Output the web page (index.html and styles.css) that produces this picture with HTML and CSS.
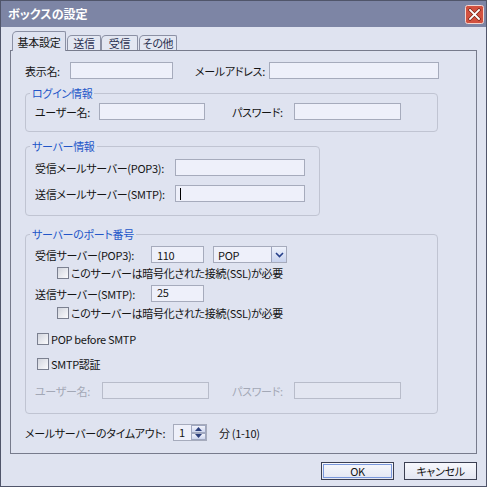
FILE: index.html
```html
<!DOCTYPE html>
<html lang="ja">
<head>
<meta charset="utf-8">
<title>ボックスの設定</title>
<link rel="stylesheet" href="styles.css">
</head>
<body>
<div class="window">
  <div class="titlebar">
    <span class="title">ボックスの設定</span>
    <span class="close">
      <svg width="19" height="19" viewBox="0 0 19 19">
        <rect x="0.5" y="0.5" width="18" height="18" rx="2" fill="#d2513f" stroke="#f4d6d0"/>
        <path d="M5 5 L14 14 M14 5 L5 14" stroke="#7a2418" stroke-width="3.2" stroke-linecap="square"/>
        <path d="M5 5 L14 14 M14 5 L5 14" stroke="#ffffff" stroke-width="1.8" stroke-linecap="square"/>
      </svg>
    </span>
  </div>
  <div class="client">
    <div class="tabs">
      <span class="tab active t1">基本設定</span>
      <span class="tab t2">送信</span>
      <span class="tab t3">受信</span>
      <span class="tab t4">その他</span>
    </div>
    <div class="panel">
      <div class="row r-top">
        <span class="lbl w45">表示名:</span><span class="input w103"></span>
        <span class="lbl ml22 w74">メールアドレス:</span><span class="input w170"></span>
      </div>

      <div class="group g-login">
        <span class="legend">ログイン情報</span>
        <div class="row r-login">
          <span class="lbl w64">ユーザー名:</span><span class="input w106"></span>
          <span class="lbl ml27 w62">パスワード:</span><span class="input w107"></span>
        </div>
      </div>

      <div class="group g-server">
        <span class="legend">サーバー情報</span>
        <div class="row r-s1">
          <span class="lbl w140">受信メールサーバー(POP3):</span><span class="input w130"></span>
        </div>
        <div class="row r-s2">
          <span class="lbl w140">送信メールサーバー(SMTP):</span><span class="input w130 caret"><span class="cursor"></span></span>
        </div>
      </div>

      <div class="group g-port">
        <span class="legend">サーバーのポート番号</span>
        <div class="row r-p1">
          <span class="lbl w116">受信サーバー(POP3):</span><span class="input w53 val">110</span>
          <span class="select">
            <span class="select-text">POP</span>
            <span class="select-btn">
              <svg width="9" height="6" viewBox="0 0 9 6"><path d="M1 1 L4.5 4.5 L8 1" fill="none" stroke="#27408a" stroke-width="1.6"/></svg>
            </span>
          </span>
        </div>
        <div class="row chk-row r-c1 indent">
          <span class="chk"></span><span class="chk-text">このサーバーは暗号化された接続(SSL)が必要</span>
        </div>
        <div class="row r-p2">
          <span class="lbl w116">送信サーバー(SMTP):</span><span class="input w53 val valtop">25</span>
        </div>
        <div class="row chk-row r-c2 indent">
          <span class="chk"></span><span class="chk-text">このサーバーは暗号化された接続(SSL)が必要</span>
        </div>
        <div class="row chk-row r-c3">
          <span class="chk"></span><span class="chk-text">POP before SMTP</span>
        </div>
        <div class="row chk-row r-c4">
          <span class="chk"></span><span class="chk-text">SMTP認証</span>
        </div>
        <div class="row r-auth disabled">
          <span class="lbl w67">ユーザー名:</span><span class="input w107 dis"></span>
          <span class="lbl ml23 w62">パスワード:</span><span class="input w107 dis"></span>
        </div>
      </div>

      <div class="row r-timeout">
        <span class="lbl w148">メールサーバーのタイムアウト:</span>
        <span class="spin">
          <span class="spin-val">1</span>
          <span class="spin-btns">
            <span class="spin-btn"><svg width="7" height="4" viewBox="0 0 7 4"><path d="M0 4 L3.5 0 L7 4 Z" fill="#2c3f7c"/></svg></span>
            <span class="spin-btn"><svg width="7" height="4" viewBox="0 0 7 4"><path d="M0 0 L3.5 4 L7 0 Z" fill="#2c3f7c"/></svg></span>
          </span>
        </span>
        <span class="unit">分 (1-10)</span>
      </div>
    </div>
    <div class="buttons">
      <span class="btn ok"><span class="ok-inner">OK</span></span>
      <span class="btn cancel">キャンセル</span>
    </div>
  </div>
</div>
</body>
</html>
```

FILE: styles.css
```css
* { box-sizing: border-box; }

body {
  margin: 0;
  background: #ffffff;
  font-family: "Noto Sans CJK JP", "Noto Sans", sans-serif;
  font-size: 11px;
  letter-spacing: -0.3px;
  font-feature-settings: "palt";
  color: #141414;
  line-height: 14px;
}

.window {
  width: 487px;
  height: 487px;
  border: 1px solid #50556a;
  background: #dfe3f0;
  display: flex;
  flex-direction: column;
}

.titlebar {
  height: 26px;
  flex: none;
  background: #7d85a5;
  display: flex;
  align-items: center;
  justify-content: space-between;
  padding: 0 2px 0 7px;
}

.title {
  color: #ffffff;
  font-weight: bold;
  font-size: 12px;
  letter-spacing: 0;
}

.close { display: flex; }

.client {
  flex: 1;
  padding: 0 9px;
  display: flex;
  flex-direction: column;
}

.tabs {
  height: 24px;
  margin-bottom: -1px;
  padding-left: 2px;
  display: flex;
  align-items: flex-end;
}

.tab {
  height: 15px;
  margin-bottom: 1px;
  border: 1px solid #8b90a4;
  border-bottom: none;
  border-radius: 5px 2px 0 0;
  background: #e3e7f2;
  display: flex;
  justify-content: center;
  align-items: center;
  color: #2a3050;
}

.tab.active {
  height: 20px;
  margin-bottom: 0;
  background: #dfe3f0;
  position: relative;
  z-index: 1;
  color: #141414;
}

.t1 { width: 54px; }
.t2 { width: 34px; margin-left: 1px; }
.t3 { width: 37px; margin-left: 0; }
.t4 { width: 38px; margin-left: 1px; }

.panel {
  height: 404px;
  border: 1px solid #777b8c;
  padding-left: 14px;
  display: flex;
  flex-direction: column;
  align-items: flex-start;
}

.row {
  display: flex;
  align-items: center;
  height: 17px;
  flex: none;
}

.lbl { flex: none; white-space: nowrap; }

.input {
  flex: none;
  height: 17px;
  border: 1px solid #a6abbc;
  background: #eef0fa;
}

.val {
  padding-left: 5px;
  display: flex;
  align-items: center;
  font-size: 11px;
}
.valtop { align-items: flex-start; line-height: 12px; }

.caret { display: flex; align-items: center; padding-left: 4px; }
.cursor { width: 1px; height: 12px; background: #000; }

.w45 { width: 45px; }
.w53 { width: 53px; }
.w62 { width: 62px; }
.w64 { width: 64px; }
.w67 { width: 67px; }
.w74 { width: 74px; }
.w103 { width: 103px; }
.w106 { width: 106px; }
.w107 { width: 107px; }
.w116 { width: 116px; }
.w130 { width: 130px; }
.w140 { width: 140px; }
.w148 { width: 148px; }
.w170 { width: 170px; }
.ml22 { margin-left: 22px; }
.ml23 { margin-left: 23px; }
.ml27 { margin-left: 27px; }

.r-top { margin-top: 11px; }

.group {
  border: 1px solid #c0c4d2;
  border-radius: 4px;
  padding-left: 9px;
  display: flex;
  flex-direction: column;
  align-items: flex-start;
  flex: none;
}

.legend {
  display: block;
  margin: -8px 0 0 -5px;
  padding: 0 2px;
  background: #dfe3f0;
  color: #2356c8;
  line-height: 14px;
}

.g-login { width: 413px; margin-top: 14px; padding-bottom: 11px; }
.r-login { margin-top: 3px; }

.g-server { width: 295px; margin-top: 14px; padding-bottom: 13px; }
.r-s1 { margin-top: 6px; }
.r-s2 { margin-top: 9px; }

.g-port { width: 413px; margin-top: 18px; padding-bottom: 14px; }
.r-p1 { margin-top: 5px; }

.select {
  flex: none;
  margin-left: 9px;
  width: 74px;
  height: 17px;
  border: 1px solid #a6abbc;
  background: #eef0fa;
  display: flex;
  align-items: center;
}
.select-text { flex: 1; padding-left: 4px; font-size: 11px; }
.select-btn {
  width: 15px;
  height: 15px;
  border-left: 1px solid #9aa2bc;
  background: linear-gradient(#eef2fc, #c9d3ee);
  display: flex;
  align-items: center;
  justify-content: center;
}

.chk-row { height: 14px; }
.indent { padding-left: 22px; }
.r-c1 { margin-top: 3px; }
.r-p2 { margin-top: 5px; }
.r-c2 { margin-top: 4px; }
.r-c3 { margin-top: 12px; padding-left: 2px; }
.r-c4 { margin-top: 11px; padding-left: 2px; }

.chk {
  flex: none;
  width: 12px;
  height: 12px;
  border: 1px solid #7b8090;
  background: linear-gradient(135deg, #d2d5de, #fbfbfd);
}
.chk-text { margin-left: 2px; white-space: nowrap; }

.r-auth { margin-top: 11px; }
.disabled .lbl { color: #a3a8b6; }
.input.dis { border-color: #b8bcca; background: #e3e6f1; }

.r-timeout { margin-top: 10px; margin-left: 0; }

.spin {
  flex: none;
  width: 34px;
  height: 17px;
  border: 1px solid #a6abbc;
  background: #eef0fa;
  display: flex;
}
.spin-val { flex: 1; padding-left: 5px; line-height: 15px; font-size: 11px; }
.spin-btns { width: 15px; display: flex; flex-direction: column; }
.spin-btn {
  flex: 1;
  border: 1px solid #a0a8c0;
  background: linear-gradient(#f2f4fc, #cdd5ee);
  display: flex;
  align-items: center;
  justify-content: center;
}

.unit { margin-left: 12px; white-space: nowrap; }

.buttons {
  margin-top: 8px;
  display: flex;
  justify-content: flex-end;
  gap: 10px;
}

.btn {
  width: 73px;
  height: 18px;
  border: 1px solid #3b3f52;
  background: linear-gradient(#f7f8fd, #e3e6f2);
  display: flex;
  align-items: center;
  justify-content: center;
  font-size: 11px;
}
.btn.ok { padding: 1px; }
.ok-inner {
  width: 100%;
  height: 100%;
  border: 1px solid #7a98dc;
  display: flex;
  align-items: center;
  justify-content: center;
}
```
